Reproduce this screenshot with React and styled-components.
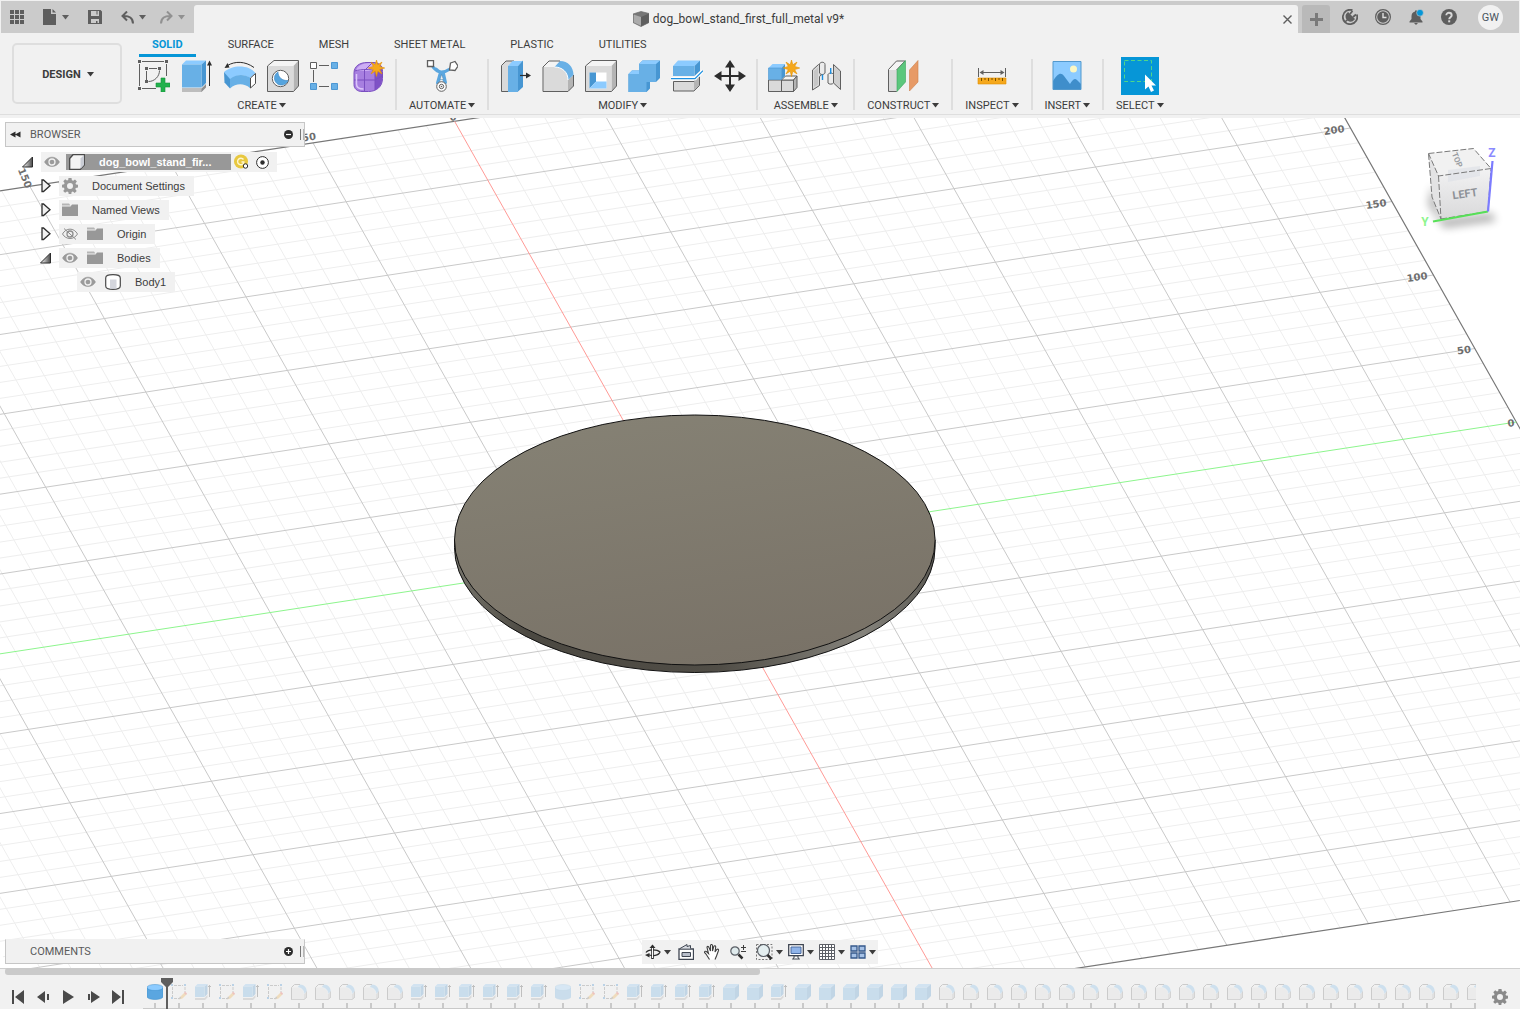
import React, { useState } from 'react'
import styled, { createGlobalStyle, css } from 'styled-components'

const GlobalStyle = createGlobalStyle`
  * {
    box-sizing: border-box;
  }

  body {
    margin: 0;
    background: #f1f1f1;
    color: #3c3c3c;
    font-family: Roboto, 'Liberation Sans', sans-serif;
    font-size: 11px;
  }

  button {
    margin: 0;
    padding: 0;
    border: 0;
    background: none;
    color: inherit;
    font: inherit;
    cursor: pointer;
  }

  svg {
    display: block;
  }
`

const Page = styled.div`
  display: flex;
  flex-direction: column;
  min-height: 100vh;
`

/* ---------- title bar ---------- */

const TitleBar = styled.header`
  display: flex;
  align-items: stretch;
  height: 33px;
  margin: 0 1px;
  border-top: 1px solid #f1f1f1;
  background: #cbcbcb;
  color: #5e5e5e;
`

const QuickAccess = styled.div`
  display: flex;
  align-items: center;
  width: 193px;
  padding-left: 9px;
`

const QuickButton = styled.button`
  display: flex;
  align-items: center;
  gap: 5px;
  margin-right: ${props => props.$after || 0}px;
  color: ${props => (props.$dim ? '#919191' : '#5e5e5e')};
`

const DocumentTab = styled.div`
  display: flex;
  flex: 1;
  align-items: center;
  margin-top: 4px;
  padding-left: 7px;
  border-radius: 3px 3px 0 0;
  background: #f1f1f1;
`

const DocumentTitle = styled.h1`
  display: flex;
  flex: 1;
  align-items: center;
  justify-content: center;
  gap: 4px;
  margin: 0;
  color: #3c3c3c;
  font-size: 12px;
  font-weight: 400;
`

const CloseTab = styled.button`
  display: grid;
  place-items: center;
  width: 22px;
  height: 28px;
  color: #5e5e5e;
`

const NewTab = styled.button`
  display: grid;
  place-items: center;
  width: 28px;
  margin: 4px 4px 0;
  border-radius: 3px 3px 0 0;
  background: #b9b9b9;
  color: #7a7a7a;
`

const AccountBar = styled.div`
  display: flex;
  align-items: center;
  gap: 17px;
  padding: 0 16px 0 8px;
`

const Avatar = styled.button`
  width: 25px;
  height: 25px;
  margin-left: 4px;
  border-radius: 50%;
  background: #f1f1f1;
  color: #4a5560;
`

/* ---------- ribbon ---------- */

const Ribbon = styled.div`
  display: flex;
  align-items: stretch;
  height: 82px;
  border-bottom: 1px solid #dedede;
`

const RibbonGap = styled.div`
  height: 3px;
`

const WorkspaceButton = styled.button`
  display: flex;
  align-items: center;
  justify-content: center;
  gap: 6px;
  width: 110px;
  height: 61px;
  margin: 10px 6px 0 12px;
  padding: 2px 0 0 2px;
  border: 2px solid #dedede;
  border-radius: 5px;
  font-weight: 700;
`

const RibbonMain = styled.div`
  flex: 1;
`

const Tabs = styled.nav`
  display: flex;
  gap: 19px;
  height: 24px;
  padding-left: 11px;
`

const Tab = styled.button`
  height: 24px;
  padding: 2px 13px 0;
  border-bottom: 3px solid transparent;

  ${props =>
    props.$active &&
    css`
      border-color: #0696d7;
      color: #0696d7;
      font-weight: 700;
    `}
`

const Groups = styled.div`
  display: flex;
`

const Group = styled.section`
  display: flex;
  flex-direction: column;
  align-items: center;
  padding: 0 10px;
`

const Divider = styled.div`
  width: 2px;
  height: 51px;
  margin-top: 2px;
  background: #dedede;
`

const ToolRow = styled.div`
  display: flex;
  align-items: center;
  gap: 11px;
  height: 38px;
`

const GroupLabel = styled.button`
  display: flex;
  align-items: center;
  gap: 2px;
  height: 20px;
  padding: 1px 2px 0;
`

/* ---------- canvas ---------- */

const Viewport = styled.main`
  position: relative;
  flex: 1;
  min-height: 320px;
  overflow: hidden;
  background: #ffffff;
`

const Scene = styled.svg`
  position: absolute;
  inset: 0;
  width: 100%;
  height: 100%;
`

const CubeSvg = styled.svg`
  position: absolute;
  top: 24px;
  right: 16px;
`

const Panel = styled.section`
  position: absolute;
  left: 5px;
  width: 300px;
  ${props => (props.$bottom ? 'bottom: 4px;' : 'top: 4px;')}
`

const PanelHeader = styled.div`
  display: flex;
  align-items: center;
  height: 25px;
  padding: 0 0 0 4px;
  border: 1px solid #c6c6c6;
  border-top-color: ${props => (props.$openTop ? '#f1f1f1' : '#c6c6c6')};
  background: #f1f1f1;
`

const PanelTitle = styled.h2`
  flex: 1;
  margin: 0;
  padding-left: ${props => (props.$indent ? 20 : 9)}px;
  color: #5a5a5a;
  font-size: 11px;
  font-weight: 400;
`

const Grip = styled.span`
  width: 4px;
  height: 11px;
  margin-left: 7px;
  border-left: 1px solid #777777;
  border-right: 1px solid #b5b5b5;
`

const Tree = styled.ul`
  margin: 5px 0 0;
  padding: 0;
  list-style: none;
  font-family: 'Liberation Sans', sans-serif;
`

const TreeRow = styled.li`
  display: flex;
  align-items: center;
  height: 20px;
  margin-bottom: 4px;
  padding-left: ${props => props.$indent}px;
`

const Twisty = styled.button`
  width: 19px;
  height: 20px;
`

const Chip = styled.div`
  display: flex;
  align-items: center;
  height: 20px;
  padding: 0 ${props => (props.$root ? 8 : 9)}px 0 3px;
  background: #f1f1f1;
`

const NodeName = styled.span`
  margin-left: 14px;
`

const RootName = styled.div`
  display: flex;
  align-items: center;
  height: 16px;
  width: 165px;
  margin: 0 3px 0 6px;
  padding-left: 3px;
  background: #989898;
  color: #ffffff;
  font-weight: 700;

  span {
    margin-left: 14px;
    white-space: nowrap;
  }
`

const ChipButton = styled.button`
  margin-right: ${props => props.$after || 0}px;
`

const NavBar = styled.div`
  position: absolute;
  bottom: 4px;
  left: 50%;
  display: flex;
  align-items: center;
  height: 24px;
  padding: 0 2px 0 3px;
  background: #f1f1f1;
  color: #3c3c3c;
  transform: translateX(-50%);
`

const NavButton = styled.button`
  display: flex;
  align-items: center;
  gap: 3px;
  margin-right: ${props => props.$after || 0}px;
`

/* ---------- timeline ---------- */

const Timeline = styled.footer`
  display: flex;
  height: 41px;
  border-top: 1px solid #cfcfcf;
`

const Playback = styled.div`
  display: flex;
  align-items: center;
  width: 143px;
  padding: 16px 0 0 6px;
  color: #4a4a4a;
`

const PlayButton = styled.button`
  display: grid;
  place-items: center;
  width: 25px;
`

const TrackWrap = styled.div`
  position: relative;
  flex: 1;
  min-width: 0;
`

const ScrollThumb = styled.div`
  position: absolute;
  z-index: 1;
  bottom: 34px;
  left: 5px;
  width: calc(50% - 5px);
  height: 7px;
  border-radius: 3px;
  background: #cacaca;
`

const TimelineArea = styled.div`
  position: relative;
`

const Track = styled.div`
  position: absolute;
  inset: 0;
  display: flex;
  padding-top: 15px;
  overflow: hidden;
  border-bottom: 1px solid #c9c9c9;
`

const Feature = styled.button`
  display: flex;
  flex: none;
  flex-direction: column;
  align-items: center;
  justify-content: space-between;
  width: 24px;

  &::after {
    content: '';
    width: 2px;
    height: 5px;
    background: #c9c9c9;
  }

  svg {
    opacity: ${props => (props.$rolledBack ? 0.25 : 1)};
  }
`

const Marker = styled.svg`
  position: absolute;
  top: 9px;
  left: 18px;
`

const TimelineSettings = styled.button`
  display: grid;
  place-items: center;
  width: 44px;
  padding: 16px 0 0 4px;
  color: #8a8a8a;
`

/* ---------- icons ---------- */

const Svg = ({ size = 32, w, h, box, children, ...rest }) => (
  <svg
    width={w || size}
    height={h || size}
    viewBox={box || `0 0 ${w || size} ${h || size}`}
    fill='none'
    aria-hidden='true'
    {...rest}
  >
    {children}
  </svg>
)

const Caret = () => (
  <Svg w={7} h={5}>
    <path d='M0 0h7L3.500 4.500z' fill='currentColor' />
  </Svg>
)

const Star = ({ x, y }) => (
  <path
    transform={`translate(${x} ${y})`}
    d='M0-8.500l1.300 4.800 4.200-2.700-2.300 4.300 5 1.600-5 1.600 2.300 4.300-4.200-2.700L0 8l-1.300-5.300-4.200 2.700 2.300-4.300-5-1.600 5-1.600-2.300-4.300 4.200 2.700z'
    fill='#f5a81c'
    stroke='#e69200'
    strokeWidth='0.6'
  />
)

const SketchIcon = () => (
  <Svg>
    <path
      d='M4 1.500h22M1.500 4v22M4 28.500h14M28.500 4v12M11 8.500h8M8.500 11v9M21.500 10.500c0 6-5 11-11 11'
      stroke='#5f5f5f'
    />
    <path
      d='M0 0h3v3H0zM27 0h3v3h-3zM0 27h3v3H0zM7 7h3v3H7zM20 7h3v3h-3zM7 20h3v3H7z'
      fill='#5f5f5f'
    />
    <path
      d='M23 18h4v5h5v4h-5v5h-4v-5h-5v-4h5z'
      fill='#22b14c'
      stroke='#15963b'
      strokeWidth='0.6'
    />
  </Svg>
)

const ExtrudeIcon = () => (
  <Svg>
    <path d='M1 28.500h19.500l4.500-4.500v3.500L20.500 32H1z' fill='#8f8f8f' />
    <path d='M1 28.500h19.500V32H1z' fill='#bdbdbd' />
    <path d='M1 4.500L5 0.500h20l-4.500 4z' fill='#8ccbff' />
    <path d='M20.500 4.500l4.500-4V23l-4.500 4.500z' fill='#4796d2' />
    <path d='M1 4.500h19.500v23H1z' fill='#68b0e6' />
    <path d='M28.500 4v22' stroke='#2d2d2d' />
    <path d='M28.500 0.500l2.500 5h-5z' fill='#2d2d2d' />
  </Svg>
)

const RevolveIcon = () => (
  <Svg>
    <path
      d='M0 12C8 5 24 4 31.500 13l-5.500 5c-6-4-14-4-20 2z'
      fill='#8ccbff'
    />
    <path d='M0 12l6 7v9.500l-5.500-6z' fill='#4796d2' />
    <path d='M6 19c6-5 14-5 20-1.500v10.500c-6-5-14-5-20 .5z' fill='#68b0e6' />
    <path
      d='M26.500 18l5-4.500v10l-5 4.500z'
      fill='#ffffff'
      stroke='#4d4d4d'
    />
    <path d='M3.500 5.500C11 1 21 1 30 7.500' stroke='#2d2d2d' />
    <path d='M0.500 8l3-5 2 4.500z' fill='#2d2d2d' />
  </Svg>
)

const Box = ({ children }) => (
  <>
    <path d='M0.500 6L7 0.500h24.500L26.500 6z' fill='#f4f4f4' />
    <path d='M26.500 6l5-5.500V26l-5 5.500z' fill='#b4b4b4' />
    <path d='M0.500 6h26v25.500H0.500z' fill='#dadada' />
    <path d='M0.500 6L7 0.500h24.500V26l-5 5.500H0.500z' stroke='#5f5f5f' />
    {children}
  </>
)

const HoleIcon = () => (
  <Svg>
    <Box>
      <circle cx='13.500' cy='18.500' r='8.200' fill='#ffffff' stroke='#5f5f5f' />
      <path
        d='M11 12c0 5 4 9 10 8.500A7 7 0 1 1 11 12z'
        fill='#55a4de'
        stroke='#3b86c2'
        strokeWidth='0.6'
      />
    </Box>
  </Svg>
)

const PatternIcon = () => (
  <Svg>
    <path d='M9 5.500h10M9 26.500h10M3.500 10v12' stroke='#5f5f5f' />
    <path d='M0.500 2.500h6v6h-6z' fill='#ffffff' stroke='#5f5f5f' />
    <path
      d='M21.500 2.500h6v6h-6zM0.500 23.500h6v6h-6zM21.500 23.500h6v6h-6z'
      fill='#68b0e6'
      stroke='#4d97d3'
    />
  </Svg>
)

const FormIcon = () => (
  <Svg>
    <path
      d='M1 13C1 6 7 2.500 14 2.500h6c6 0 9.500 3 9.500 9v7c0 8-6 13-14 13H9c-5 0-8-3-8-7z'
      fill='#a77fe0'
      stroke='#7a4fc0'
    />
    <path d='M4 8c3-4 8-5 15-5l5 2-5 6H3z' fill='#cdaef5' />
    <path d='M22 10l7-4v13c0 5-3 9-7 11z' fill='#7f52c6' />
    <path
      d='M1 20h21M11.500 10v21M1.500 11C9 9 18 9 22 11M22 11v19M22 20l7-4M12 10l7-7'
      stroke='#7a4fc0'
    />
    <path d='M3.500 14v10c0 4 3 5 7 5' stroke='#dcc5fa' strokeWidth='1.500' />
    <Star x={23.500} y={8.500} />
  </Svg>
)

const AutomateIcon = () => (
  <Svg>
    <path
      d='M7 7c4 5 7 5 8.500 5S21 11 24 9M14 14l-2.500 9M17.500 13.500l2 9M10 9c3 4 8 4 12 1M15.500 13l-3 8M15.500 13l3 8'
      stroke='#5aa6df'
      strokeWidth='3'
      strokeLinecap='round'
    />
    <path d='M15.500 14.500l2 5h-3.500z' fill='#f1f1f1' stroke='#4b80a8' strokeWidth='0.500' />
    <path d='M1.500 0.500h6v6h-6z' fill='#ffffff' stroke='#5f5f5f' strokeWidth='1.300' />
    <path
      d='M24.500 3l4.500-1.500L32 6l-3 4.500-5.500-.5z'
      fill='#ffffff'
      stroke='#5f5f5f'
      strokeWidth='1.300'
    />
    <circle cx='15.500' cy='26.500' r='4.800' fill='#ffffff' stroke='#5f5f5f' />
    <circle cx='15.500' cy='26.500' r='2.200' stroke='#5f5f5f' />
    <circle cx='15.500' cy='26.500' r='0.800' fill='#5f5f5f' />
  </Svg>
)

const PressPullIcon = () => (
  <Svg>
    <path
      d='M2.500 5.500L7 1h8v30.500H2.500z'
      fill='#dadada'
      stroke='#5f5f5f'
    />
    <path d='M9 6l4.500-5H24l-5 5z' fill='#8ccbff' />
    <path d='M19 6l5-5.500V27l-5 4.500z' fill='#4796d2' />
    <path d='M9 6h10v26H9z' fill='#68b0e6' />
    <path d='M21 15.500h7' stroke='#2d2d2d' strokeWidth='1.200' />
    <path d='M27 12.500l5 3-5 3z' fill='#2d2d2d' />
  </Svg>
)

const FilletIcon = ({ size = 32, line = 1 }) => (
  <Svg size={size} box='0 0 32 32'>
    <path
      d='M1.500 7L7 0.800h8L26 8l5.500 7v10.500L26 31.500H1.500z'
      fill='#f4f4f4'
    />
    <path d='M26 20l5.500-5v11L26 31.500z' fill='#b4b4b4' />
    <path d='M1.500 7h11C20 7 26 12 26 20v11.500H1.500z' fill='#dadada' />
    <path d='M12.500 7L18 1c8 0 13.500 6 13.500 14L26 20c0-8-6-13-13.500-13z' fill='#68b0e6' />
    <path
      d='M18 1H7L1 7v24.500h25l5.500-5.500V15'
      stroke='#5f5f5f'
      strokeWidth={line}
    />
    <path d='M12.500 7C20 7 26 12 26 20' stroke='#ffffff' />
  </Svg>
)

const ShellIcon = () => (
  <Svg>
    <Box>
      <path d='M4.500 12.500h17v16h-17z' fill='#ffffff' />
      <path d='M4.500 12.500h6.500v9l-6.500 7z' fill='#4796d2' />
      <path d='M4.500 28.500l6.500-7h10.500v7z' fill='#8ccbff' />
    </Box>
  </Svg>
)

const CombineIcon = () => (
  <Svg>
    <path d='M0.500 14L4 10.500h7V4L14.500 0.500H32V18l-4 4h-6v6.500l-3.500 3.500h-18z' fill='#4796d2' />
    <path d='M0.500 14L4 10.500h7V14zM11 4l3.500-3.500H32L28 4z' fill='#8ccbff' />
    <path d='M0.500 14H11V4h17v18h-9.500v10h-18z' fill='#68b0e6' />
  </Svg>
)

const SplitIcon = () => (
  <Svg>
    <path d='M2.500 21.500h20.500l5.500-5v9L23 31H2.500z' fill='#dadada' stroke='#5f5f5f' />
    <path d='M23 22l5-4.500v8L23 30.500z' fill='#b4b4b4' />
    <path d='M2 6l5-5.500h22L23.500 6z' fill='#8ccbff' />
    <path d='M23.500 6L29 0.500V11l-5.500 5z' fill='#4796d2' />
    <path d='M2 6h21.500v10H2z' fill='#68b0e6' />
    <path d='M0 18.700h24l8-8' stroke='#ffffff' strokeWidth='3.500' />
    <path d='M0 18.700h24l8-8' stroke='#1e90e0' strokeWidth='1.300' />
  </Svg>
)

const MoveIcon = () => (
  <Svg>
    <path d='M16 5v22M5 16h22' stroke='#2d2d2d' strokeWidth='2' />
    <path
      d='M16 0l5 7.500H11zM16 32l5-7.500H11zM0 16l7.500-5v10zM32 16l-7.500-5v10z'
      fill='#2d2d2d'
    />
  </Svg>
)

const NewComponentIcon = () => (
  <Svg>
    <path d='M0.500 20h13v11.500H0.500zM13.500 20h12v11.500h-12z' fill='#dadada' stroke='#5f5f5f' />
    <path d='M13.500 20l4-4H29l-3.500 4z' fill='#f4f4f4' stroke='#5f5f5f' />
    <path d='M25.500 20l3.500-4v11.500l-3.500 4z' fill='#b4b4b4' stroke='#5f5f5f' />
    <path d='M0.500 8L4.500 4H17l-3.500 4z' fill='#8ccbff' />
    <path d='M13.500 8L17 4v12l-3.500 3.500z' fill='#4796d2' />
    <path d='M0.500 8h13v11.500h-13z' fill='#68b0e6' stroke='#4796d2' strokeWidth='0.600' />
    <Star x={23.500} y={8.500} />
  </Svg>
)

const JointIcon = () => (
  <Svg>
    <path d='M1.500 10l6-5.500h4V14l-3 2.500v9l-7 4.500z' fill='#dadada' stroke='#5f5f5f' />
    <path d='M3 11l4-3.500v17L3 27z' fill='#c6c6c6' />
    <path d='M8.500 4.500c0-3 5.500-3 5.500 0V13c-1 2-4.500 2-5.500 0z' fill='#ececec' stroke='#5f5f5f' />
    <path d='M22.500 4.500l7 6.500v18.500l-7-6.500z' fill='#cfcfcf' stroke='#5f5f5f' />
    <path d='M17 14.500c1-2 4.500-2 5.500 0V23c-1 1.500-4.500 1.500-5.500 0z' fill='#ececec' stroke='#5f5f5f' />
    <path d='M11.500 14.500V20M19.700 8v6' stroke='#1e90e0' strokeWidth='1.400' />
  </Svg>
)

const ConstructIcon = () => (
  <Svg>
    <path d='M1.500 9.500l8-8.500H18L9.500 10v21.500h-8z' fill='#f4f4f4' stroke='#5f5f5f' />
    <path d='M2 10h8v21H2z' fill='#dadada' />
    <path d='M10 10l8.500-9.500v21.500L10 31.500z' fill='#5bc77c' stroke='#3da45e' strokeWidth='0.600' />
    <path d='M22.500 10L31 0.500v21.500l-8.500 9z' fill='#e79a66' stroke='#cd7f4c' strokeWidth='0.600' />
  </Svg>
)

const MeasureIcon = () => (
  <Svg>
    <path d='M2.500 8v9M29.500 8v9M5 12.500h22' stroke='#5f5f5f' />
    <path d='M3.500 12.500l4-2.500v5zM28.500 12.500l-4-2.500v5z' fill='#5f5f5f' />
    <path d='M2 18h28v6H2z' fill='#f5a81c' stroke='#e08f00' strokeWidth='0.600' />
    <path
      d='M5.500 18v3M9 18v2M12.500 18v3M16 18v2M19.500 18v3M23 18v2M26.500 18v3'
      stroke='#7b5200'
    />
  </Svg>
)

const InsertIcon = () => (
  <Svg>
    <path d='M2 1.500h28v28H2z' fill='#8ccbff' />
    <path
      d='M2 21c5-8 8-9 11-5l6 8c3-5 5-6 7-4l4 4v6H2z'
      fill='#3f8ecb'
    />
    <path d='M2 1.500h28v28H2z' stroke='#5399cd' />
    <circle cx='22.500' cy='9' r='3.500' fill='#fbf7c4' />
  </Svg>
)

const SelectIcon = () => (
  <Svg size={38}>
    <path d='M0 0h38v38H0z' fill='#0696d7' />
    <path d='M3.500 3.500h27v21h-27z' stroke='#4fd68a' strokeDasharray='4 2.500' />
    <path
      d='M24 17.500v15l3.500-3 2.500 5.500 3-1.500-2.500-5h4.500z'
      fill='#ffffff'
    />
  </Svg>
)

const GridIcon = () => (
  <Svg size={15}>
    <path
      d='M0 0h4v4H0zM5 0h4v4H5zM10 0h4v4h-4zM0 5h4v4H0zM5 5h4v4H5zM10 5h4v4h-4zM0 10h4v4H0zM5 10h4v4H5zM10 10h4v4h-4z'
      fill='currentColor'
    />
  </Svg>
)

const FileIcon = () => (
  <Svg w={14} h={16}>
    <path d='M0 0h8v5h5v11H0z' fill='currentColor' />
    <path d='M9.500 0v3.500H13z' fill='currentColor' />
  </Svg>
)

const SaveIcon = () => (
  <Svg w={14} h={14}>
    <path
      d='M0 0h12.500L14 1.500V14H0zM3 1v5h8V1H9.500v3.500h-1V1zM3 9v4h5v-2h1.500v2H11V9z'
      fill='currentColor'
      fillRule='evenodd'
    />
  </Svg>
)

const UndoIcon = ({ flip }) => (
  <Svg w={13} h={13}>
    <path
      d={
        flip
          ? 'M7 0.500L11.500 5 7 9.500M11 5C5 4.500 1 7 1 12.500'
          : 'M6 0.500L1.500 5 6 9.500M2 5c6-.5 10 2 10 7.500'
      }
      stroke='currentColor'
      strokeWidth='2'
    />
  </Svg>
)

const PartIcon = () => (
  <Svg w={16} h={16}>
    <path d='M0 3L8 0.500l8 2v9L8 15.500l-8-4z' fill='#777777' />
    <path d='M0.500 3.500L8 6v9l-7.500-3.500z' fill='#ababab' />
    <path d='M8 6l8-3.500v9L8 15.500z' fill='#5f5f5f' />
    <path d='M0 3L8 0.500l8 2v9L8 15.500l-8-4z' stroke='#6b6b6b' strokeWidth='0.700' />
  </Svg>
)

const CrossIcon = () => (
  <Svg size={9}>
    <path d='M0.500 0.500l8 8M8.500 0.500l-8 8' stroke='currentColor' strokeWidth='1.400' />
  </Svg>
)

const PlusIcon = () => (
  <Svg size={13}>
    <path d='M6.500 0v13M0 6.500h13' stroke='currentColor' strokeWidth='3' />
  </Svg>
)

const ExtensionsIcon = () => (
  <Svg size={16}>
    <path
      d='M10.500 1.200a7.200 7.200 0 1 0 4.300 4.300'
      stroke='#5e5e5e'
      strokeWidth='1.800'
    />
    <path
      d='M3 13l2.500-2.500c-2-2.500-1.500-5 .5-6.500L12 10c-1.500 2-4 2.500-6 1'
      fill='#5e5e5e'
      stroke='#5e5e5e'
      strokeWidth='1.500'
    />
    <path d='M8 5l2.500-3M11 8l3-2.500' stroke='#5e5e5e' strokeWidth='1.800' />
  </Svg>
)

const ClockIcon = () => (
  <Svg size={16}>
    <circle cx='8' cy='8' r='7.400' stroke='#5e5e5e' strokeWidth='1.200' />
    <circle cx='8' cy='8' r='5.800' fill='#5e5e5e' />
    <path d='M8 4v4.500h3.500' stroke='#e0e0e0' strokeWidth='1.400' />
  </Svg>
)

const BellIcon = () => (
  <Svg size={16}>
    <path
      d='M7 1.500h2v1c2.500.8 3.500 2.500 3.500 5v2.500l2 2.500v1h-13v-1l2-2.500V7.500c0-2.500 1-4.200 3.500-5z'
      fill='#5e5e5e'
    />
    <path d='M6 14h4l-2 2z' fill='#5e5e5e' />
    <circle cx='12' cy='3.800' r='3.400' fill='#0696d7' stroke='#cbcbcb' strokeWidth='0.600' />
  </Svg>
)

const HelpIcon = () => (
  <Svg size={16}>
    <circle cx='8' cy='8' r='8' fill='#5e5e5e' />
    <path
      d='M5.300 6.300C5.300 2.800 10.700 3 10.700 6.200c0 2-2.500 2-2.500 4'
      stroke='#d8d8d8'
      strokeWidth='1.900'
    />
    <path d='M7.200 11.300h2v2h-2z' fill='#d8d8d8' />
  </Svg>
)

const RewindIcon = () => (
  <Svg w={11} h={8}>
    <path d='M5.500 0.500v6L0 3.500zM10.500 0.500v6L5 3.500z' fill='#2d2d2d' />
  </Svg>
)

const RoundIcon = ({ plus }) => (
  <Svg size={9}>
    <circle cx='4.500' cy='4.500' r='4.500' fill='#2d2d2d' />
    <path d={plus ? 'M2 4.500h5M4.500 2v5' : 'M2 4.500h5'} stroke='#ffffff' strokeWidth='1.200' />
  </Svg>
)

const twistyStops = (
  <defs>
    <linearGradient id='twisty' x1='0' x2='1'>
      <stop offset='0' stopColor='#ffffff' />
      <stop offset='1' stopColor='#4a4a4a' />
    </linearGradient>
  </defs>
)

const OpenTwisty = () => (
  <Svg w={12} h={12}>
    {twistyStops}
    <path d='M10.500 1v10H0.500z' fill='url(#twisty)' stroke='#2d2d2d' />
  </Svg>
)

const ClosedTwisty = () => (
  <Svg w={12} h={14}>
    <path d='M2 1v11.500h1.500L10 6.800 3.500 1z' fill='#f1f1f1' stroke='#2d2d2d' strokeWidth='1.300' />
  </Svg>
)

const EyeIcon = ({ off }) => (
  <Svg w={16} h={12}>
    <path
      d='M0.500 6C4-.5 12-.5 15.500 6 12 12 4 12 0.500 6z'
      fill={off ? 'none' : '#9b9b9b'}
      stroke='#8d8d8d'
      strokeWidth={off ? 1 : 0.5}
    />
    <circle
      cx='8'
      cy='6'
      r='3'
      fill={off ? 'none' : '#9b9b9b'}
      stroke={off ? '#8d8d8d' : '#f1f1f1'}
      strokeWidth='1.300'
    />
    {off && <path d='M2 0.500l12 11' stroke='#8d8d8d' />}
  </Svg>
)

const gearPath =
  'M6.500 0h3l.4 2.200 1.300.6L13 1.500 14.900 3.400 13.500 5.200l.5 1.300 2 .3v2.700l-2.200.4-.5 1.200 1.400 1.900-2 1.900-1.800-1.300-1.300.5L9.300 16H6.700l-.4-2-1.300-.5-1.900 1.300-1.900-1.900L2.500 11.200 2 9.800 0 9.400V6.700l2.100-.4.5-1.200L1.300 3.200 3.200 1.300 5 2.600l1.200-.5zM8 5a3 3 0 1 0 0 6 3 3 0 0 0 0-6z'

const GearIcon = ({ fill = '#989898' }) => (
  <Svg size={16}>
    <path d={gearPath} fill={fill} fillRule='evenodd' />
  </Svg>
)

const FolderIcon = () => (
  <Svg w={16} h={14}>
    <path d='M0 0.500h7l1.500 2H0z' fill='#b5b5b5' />
    <path d='M0 3.500h8.500l1.500-2h6V13H0z' fill='#989898' />
  </Svg>
)

const ComponentIcon = () => (
  <Svg size={16}>
    <path d='M0.700 4.500L4 0.700h11.300V11l-4 4.300H0.700z' fill='#f4f4f4' stroke='#4a4a4a' strokeWidth='1.300' />
    <path d='M11.500 4.500l3.500-3.500v10l-3.500 4z' fill='#c9ccd4' />
  </Svg>
)

const BodyIcon = () => (
  <Svg size={16}>
    <path
      d='M0.700 4C0.700 1.500 3 0.700 8 0.700s7.300.8 7.300 3.300v8c0 2.500-2.300 3.300-7.300 3.300S0.700 14.500 0.700 12z'
      fill='#ffffff'
      stroke='#4a4a4a'
      strokeWidth='1.200'
    />
    <path d='M5 5.500h6.500v9.500H5z' fill='#c9ccd4' opacity='0.800' />
  </Svg>
)

const OwnerIcon = () => (
  <Svg w={16} h={16}>
    <circle cx='7' cy='7.500' r='7' fill='#e8c840' />
    <path d='M9.500 5.500a3.300 3.300 0 1 0 .3 3.500V8H7.500' stroke='#fff7cf' strokeWidth='1.400' />
    <circle cx='11.500' cy='12' r='2.200' fill='#ffffff' stroke='#2d2d2d' />
  </Svg>
)

const ActivateIcon = () => (
  <Svg size={13}>
    <circle cx='6.500' cy='6.500' r='5.900' fill='#ffffff' stroke='#2d2d2d' />
    <circle cx='6.500' cy='6.500' r='2.200' fill='#2d2d2d' />
  </Svg>
)

const OrbitIcon = () => (
  <Svg size={16}>
    <path d='M1 8.500C3 5 12 5 15 8c-1 3.500-8 4.500-12 2.500' stroke='#2d2d2d' strokeWidth='1.200' />
    <path d='M7.500 15V3' stroke='#2d2d2d' strokeWidth='2.600' />
    <path d='M7.500 14V3' stroke='#ffffff' />
    <path d='M7.500 0.500l3 3.500h-6z' fill='#2d2d2d' />
    <path d='M0 11l4.500-2v4.500z' fill='#2d2d2d' />
  </Svg>
)

const LookAtIcon = () => (
  <Svg size={16}>
    <path d='M1 5h14.500v10.500H1z' fill='#ffffff' stroke='#3f4652' strokeWidth='1.300' />
    <path d='M4 8.500h8.500v4H4z' fill='#b9bfcb' stroke='#3f4652' />
    <path d='M2 4.500l7-4v2l3.500-1V4.500' fill='#d8dbe2' stroke='#3f4652' />
  </Svg>
)

const PanIcon = () => (
  <Svg size={16}>
    <path
      d='M5.500 15.500L2 10 0.500 8.500c0-1.500 1.500-1.500 2.500-.5l1.500 1.500L3 3.500c0-1.500 1.500-1.500 2 0L6.500 7V1.500c.2-1.300 1.800-1.300 2 0V7l1.300-4.500c.6-1.200 2-.8 1.900.5L11 8l1.800-2.500c1-.8 2 0 1.700 1L12.500 12 11 15.500'
      fill='#ffffff'
      stroke='#3f3f3f'
      strokeWidth='1.100'
    />
  </Svg>
)

const ZoomIcon = () => (
  <Svg size={16}>
    <circle cx='5' cy='7' r='4.200' fill='#dfeaec' stroke='#5a5f66' strokeWidth='1.200' />
    <path d='M8.500 10.500l4 4' stroke='#2d2d2d' strokeWidth='2.500' />
    <path d='M11 3.500h5M13.500 1v5M11 7.500h5' stroke='#3f3f3f' />
  </Svg>
)

const FitIcon = () => (
  <Svg w={17} h={16}>
    <path d='M0.500 0.500h15.500v15H0.500z' stroke='#777777' strokeDasharray='2 1.500' />
    <circle cx='7.500' cy='6.500' r='6' fill='#e4eef0' stroke='#5a5f66' strokeWidth='1.200' />
    <path d='M11.500 11l4 4' stroke='#2d2d2d' strokeWidth='2.500' />
  </Svg>
)

const DisplayIcon = () => (
  <Svg size={16}>
    <path d='M0.700 0.700h14.600v11H0.700z' fill='#ffffff' stroke='#3f4652' strokeWidth='1.300' />
    <path d='M3 3h10v6.500H3z' fill='#8fb4ea' stroke='#4a6ba0' />
    <path d='M6 12h4v2l1.500 1h-7L6 14z' fill='#ffffff' stroke='#3f4652' />
  </Svg>
)

const LayoutGridIcon = () => (
  <Svg size={16}>
    <path
      d='M0.500 0.500h15v15H0.500zM3.500 0v16M6.500 0v16M9.500 0v16M12.500 0v16M0 3.500h16M0 6.500h16M0 9.500h16M0 12.500h16'
      stroke='#5c5f66'
      fill='#ffffff'
    />
  </Svg>
)

const ViewportsIcon = () => (
  <Svg w={16} h={14}>
    <path
      d='M1 1h6v5H1zM9 1h6v5H9zM1 8h6v5H1zM9 8h6v5H9z'
      fill='#a5c1e6'
      stroke='#34588c'
      strokeWidth='1.300'
    />
  </Svg>
)

/* small timeline feature icons */

const TimelineIcon = ({ kind }) => {
  if (kind === 'fillet') {
    return <FilletIcon size={16} line={2} />
  }
  if (kind === 'cylinder') {
    return (
      <Svg size={16}>
        <path d='M0 3.500v9c0 4 16 4 16 0v-9z' fill='#5aa6e0' />
        <ellipse cx='8' cy='3.500' rx='8' ry='3' fill='#8ccbff' />
        <path d='M0 3.500v9c0 4 16 4 16 0v-9M0 3.500C0-.5 16-.5 16 3.500S0 7.500 0 3.500' stroke='#3f8ecb' strokeWidth='0.500' />
      </Svg>
    )
  }
  if (kind === 'box') {
    return (
      <Svg size={16}>
        <path d='M0 3.500L3.500 0H16l-4 3.500z' fill='#79bdf2' />
        <path d='M12 3.500L16 0v12l-4 4z' fill='#3584c4' />
        <path d='M0 3.500h12V16H0z' fill='#55a4de' />
      </Svg>
    )
  }
  if (kind === 'extrude') {
    return (
      <Svg size={16}>
        <path d='M0 14h9.500l3-3v2.500L10 16H0z' fill='#999999' />
        <path d='M0 2.500L2.500 0h10l-3 2.500z' fill='#79bdf2' />
        <path d='M9.500 2.500l3-2.500v10l-3 3z' fill='#3584c4' />
        <path d='M0 2.500h9.500V13H0z' fill='#55a4de' />
        <path d='M14.500 1v12M13 2.500h3' stroke='#2d2d2d' />
      </Svg>
    )
  }
  return (
    <Svg size={16}>
      <path d='M3 1.500h9M1.500 3v10M14 3v5M3 14.500h5' stroke='#5f5f5f' strokeDasharray='3 1' />
      <path d='M0 0h2v2H0zM13 0h2v2h-2zM0 13h2v2H0z' fill='#1e78c8' />
      <path d='M8 15.500l1.500-3 4-4 2 2-4 4z' fill='#eda225' />
      <path d='M13 9l1-1.500 2 2L15 11z' fill='#e2382e' />
      <path d='M7.500 15.500l1.500-3 1.500 1.500z' fill='#555555' />
    </Svg>
  )
}

/* ---------- data ---------- */

const ribbonTabs = ['SOLID', 'SURFACE', 'MESH', 'SHEET METAL', 'PLASTIC', 'UTILITIES']

const ribbonGroups = [
  {
    label: 'CREATE',
    tools: [
      ['Create Sketch', SketchIcon],
      ['Extrude', ExtrudeIcon],
      ['Revolve', RevolveIcon],
      ['Hole', HoleIcon],
      ['Rectangular Pattern', PatternIcon],
      ['Create Form', FormIcon]
    ]
  },
  { label: 'AUTOMATE', tools: [['Automated Modeling', AutomateIcon]] },
  {
    label: 'MODIFY',
    tools: [
      ['Press Pull', PressPullIcon],
      ['Fillet', FilletIcon],
      ['Shell', ShellIcon],
      ['Combine', CombineIcon],
      ['Split Body', SplitIcon],
      ['Move', MoveIcon]
    ]
  },
  {
    label: 'ASSEMBLE',
    tools: [
      ['New Component', NewComponentIcon],
      ['Joint', JointIcon]
    ]
  },
  { label: 'CONSTRUCT', tools: [['Offset Plane', ConstructIcon]] },
  { label: 'INSPECT', tools: [['Measure', MeasureIcon]] },
  { label: 'INSERT', tools: [['Insert Image', InsertIcon]] },
  { label: 'SELECT', tools: [['Select', SelectIcon]] }
]

const repeat = (kind, count) => Array(count).fill(kind)

const features = [
  'cylinder',
  'sketch',
  'extrude',
  'sketch',
  'extrude',
  'sketch',
  ...repeat('fillet', 5),
  ...repeat('extrude', 6),
  'cylinder',
  ...repeat('sketch', 2),
  ...repeat('extrude', 4),
  ...repeat('box', 2),
  'extrude',
  ...repeat('box', 6),
  ...repeat('fillet', 23)
]

/* ---------- ground grid ---------- */

// one grid square is 10 mm, u runs along the green axis and v along the red one
const project = (u, v) => [
  695 + u * 28.32 + v * 8.29,
  429.6 - u * 4.33 + v * 14.7
]

const segment = (u1, v1, u2, v2) =>
  `M${project(u1, v1).join(' ')}L${project(u2, v2).join(' ')}`

const MIN_U = -30
const MAX_U = 29
const MIN_V = -29
const MAX_V = 30

const gridLines = wanted => {
  let d = ''
  for (let u = MIN_U + 1; u < MAX_U; u++) {
    if (u !== 0 && (u % 5 === 0) === wanted) d += segment(u, MIN_V, u, MAX_V)
  }
  for (let v = MIN_V + 1; v < MAX_V; v++) {
    if (v !== 0 && (v % 5 === 0) === wanted) d += segment(MIN_U, v, MAX_U, v)
  }
  return d
}

const minorLines = gridLines(false)
const majorLines = gridLines(true)

const border =
  segment(MIN_U, MIN_V, MAX_U, MIN_V) +
  segment(MAX_U, MIN_V, MAX_U, MAX_V) +
  segment(MIN_U, MAX_V, MAX_U, MAX_V)

const rulerLabels = [
  ['200', 1334, 12, -8],
  ['150', 1376, 86, -8],
  ['100', 1417, 159, -8],
  ['50', 1464, 232, -8],
  ['0', 1511, 305, -8],
  ['50', 309, 19, -8],
  ['0', 453, -1, -8],
  ['150', 25, 60, 68]
]

const RulerText = styled.text`
  fill: #6e6e6e;
  font-family: 'DejaVu Sans', sans-serif;
  font-size: 10px;
  font-weight: 700;
  text-anchor: middle;
  dominant-baseline: central;
`

const Model = () => (
  <Scene viewBox='0 0 1520 850' preserveAspectRatio='xMinYMin slice' aria-label='Model'>
    <defs>
      <linearGradient id='face' x1='0.3' y1='0' x2='0.600' y2='1'>
        <stop offset='0' stopColor='#858174' />
        <stop offset='1' stopColor='#797267' />
      </linearGradient>
      <linearGradient id='rim' x1='0' x2='1'>
        <stop offset='0' stopColor='#77756c' />
        <stop offset='0.150' stopColor='#4c4942' />
        <stop offset='0.550' stopColor='#504d46' />
        <stop offset='0.850' stopColor='#85837c' />
        <stop offset='1' stopColor='#5a5852' />
      </linearGradient>
    </defs>
    <path d={minorLines} stroke='#eeeeee' fill='none' />
    <path d={majorLines} stroke='#c9c9c9' fill='none' />
    <path d={border} stroke='#777777' fill='none' strokeWidth='1.200' />
    <path d={segment(MIN_U, 0, MAX_U, 0)} stroke='#8df58d' />
    <path d={segment(0, MIN_V, 0, MAX_V)} stroke='#ff9a96' />
    {rulerLabels.map(([text, x, y, angle]) => (
      <RulerText key={`${text}-${x}`} transform={`translate(${x} ${y}) rotate(${angle})`}>
        {text}
      </RulerText>
    ))}
    <path
      d='M454.500 422v7.500a240.300 125 0 0 0 480.600 0V422z'
      fill='url(#rim)'
      stroke='#111111'
    />
    <ellipse cx='694.800' cy='422' rx='240.300' ry='125' fill='url(#face)' stroke='#111111' />
  </Scene>
)

const CubeText = styled.text`
  fill: ${props => props.$color};
  font-family: Roboto, sans-serif;
  font-size: ${props => props.$size}px;
  font-weight: 700;
  text-anchor: middle;
  dominant-baseline: central;
`

const ViewCube = () => (
  <CubeSvg width='90' height='96' viewBox='1414 142 90 96' aria-label='View cube'>
    <defs>
      <filter id='soft' x='-30%' y='-30%' width='160%' height='160%'>
        <feGaussianBlur stdDeviation='4' />
      </filter>
      <linearGradient id='cubeFront' x1='0' y1='0' x2='0' y2='1'>
        <stop offset='0' stopColor='#f2f2f3' />
        <stop offset='1' stopColor='#d9d9da' />
      </linearGradient>
    </defs>
    <path d='M1432 185l10 34 50-6 4 8-52 7-16-24z' fill='#000000' opacity='0.300' filter='url(#soft)' />
    <path d='M1428.500 153.500l45-5 17.500 20-52.500 7.500z' fill='#f1f1f1' />
    <path d='M1428.500 153.500l10 22.500 2.500 43-9-22z' fill='#e3e3e4' />
    <path d='M1438.500 176l52.500-7.500-3 43-47 7.500z' fill='url(#cubeFront)' />
    <path d='M1448 170l32-4v10l-32 6z' fill='#dcdfe6' opacity='0.600' />
    <path
      d='M1428.500 153.500l45-5 17.500 20-52.500 7.500zM1438.500 176l2.500 43-9-22-3.500-43.500M1441 219l47-7.500 3-43'
      stroke='#7a7a7a'
      strokeDasharray='6 2'
      fill='none'
    />
    <path d='M1433 221.500l55-10' stroke='#57e057' strokeWidth='2.200' />
    <path d='M1488 211.500l4.500-50.500' stroke='#7c7cff' strokeWidth='2.200' />
    <CubeText $color='#8d9197' $size={11} transform='translate(1465 194) rotate(-8)'>
      LEFT
    </CubeText>
    <CubeText $color='#9a9da2' $size={8} transform='translate(1457 160) rotate(68)'>
      TOP
    </CubeText>
    <CubeText $color='#8ef58e' $size={12} x='1425' y='222'>
      Y
    </CubeText>
    <CubeText $color='#8a8aff' $size={12} x='1492' y='153'>
      Z
    </CubeText>
  </CubeSvg>
)

/* ---------- components ---------- */

const Header = () => (
  <TitleBar>
    <QuickAccess>
      <QuickButton aria-label='Show data panel' $after={18}>
        <GridIcon />
      </QuickButton>
      <QuickButton aria-label='File' $after={19}>
        <FileIcon />
        <Caret />
      </QuickButton>
      <QuickButton aria-label='Save' $after={19}>
        <SaveIcon />
      </QuickButton>
      <QuickButton aria-label='Undo' $after={14}>
        <UndoIcon />
        <Caret />
      </QuickButton>
      <QuickButton aria-label='Redo' $dim>
        <UndoIcon flip />
        <Caret />
      </QuickButton>
    </QuickAccess>
    <DocumentTab>
      <DocumentTitle>
        <PartIcon />
        dog_bowl_stand_first_full_metal v9*
      </DocumentTitle>
      <CloseTab aria-label='Close document'>
        <CrossIcon />
      </CloseTab>
    </DocumentTab>
    <NewTab aria-label='New design'>
      <PlusIcon />
    </NewTab>
    <AccountBar>
      <button aria-label='Extensions'>
        <ExtensionsIcon />
      </button>
      <button aria-label='Job status'>
        <ClockIcon />
      </button>
      <button aria-label='Notifications'>
        <BellIcon />
      </button>
      <button aria-label='Help'>
        <HelpIcon />
      </button>
      <Avatar>GW</Avatar>
    </AccountBar>
  </TitleBar>
)

const Toolbar = () => {
  const [active, setActive] = useState('SOLID')

  return (
    <Ribbon>
      <WorkspaceButton>
        DESIGN
        <Caret />
      </WorkspaceButton>
      <RibbonMain>
        <Tabs>
          {ribbonTabs.map(name => (
            <Tab key={name} $active={name === active} onClick={() => setActive(name)}>
              {name}
            </Tab>
          ))}
        </Tabs>
        <Groups>
          {ribbonGroups.map((group, i) => (
            <React.Fragment key={group.label}>
              {i > 0 && <Divider />}
              <Group>
                <ToolRow>
                  {group.tools.map(([name, Icon]) => (
                    <button key={name} aria-label={name}>
                      <Icon />
                    </button>
                  ))}
                </ToolRow>
                <GroupLabel>
                  {group.label}
                  <Caret />
                </GroupLabel>
              </Group>
            </React.Fragment>
          ))}
        </Groups>
      </RibbonMain>
    </Ribbon>
  )
}

const Browser = () => (
  <Panel>
    <PanelHeader>
      <button aria-label='Collapse browser'>
        <RewindIcon />
      </button>
      <PanelTitle>BROWSER</PanelTitle>
      <button aria-label='Hide browser'>
        <RoundIcon />
      </button>
      <Grip />
    </PanelHeader>
    <Tree>
      <TreeRow $indent={17}>
        <Twisty aria-label='Collapse document'>
          <OpenTwisty />
        </Twisty>
        <Chip $root>
          <ChipButton aria-label='Toggle document visibility'>
            <EyeIcon />
          </ChipButton>
          <RootName>
            <ComponentIcon />
            <span>dog_bowl_stand_fir...</span>
          </RootName>
          <ChipButton aria-label='Owner' $after={6}>
            <OwnerIcon />
          </ChipButton>
          <ChipButton aria-label='Activate component'>
            <ActivateIcon />
          </ChipButton>
        </Chip>
      </TreeRow>
      <TreeRow $indent={35}>
        <Twisty aria-label='Expand Document Settings'>
          <ClosedTwisty />
        </Twisty>
        <Chip>
          <GearIcon />
          <NodeName>Document Settings</NodeName>
        </Chip>
      </TreeRow>
      <TreeRow $indent={35}>
        <Twisty aria-label='Expand Named Views'>
          <ClosedTwisty />
        </Twisty>
        <Chip>
          <FolderIcon />
          <NodeName>Named Views</NodeName>
        </Chip>
      </TreeRow>
      <TreeRow $indent={35}>
        <Twisty aria-label='Expand Origin'>
          <ClosedTwisty />
        </Twisty>
        <Chip>
          <ChipButton aria-label='Show Origin' $after={9}>
            <EyeIcon off />
          </ChipButton>
          <FolderIcon />
          <NodeName>Origin</NodeName>
        </Chip>
      </TreeRow>
      <TreeRow $indent={35}>
        <Twisty aria-label='Collapse Bodies'>
          <OpenTwisty />
        </Twisty>
        <Chip>
          <ChipButton aria-label='Hide Bodies' $after={9}>
            <EyeIcon />
          </ChipButton>
          <FolderIcon />
          <NodeName>Bodies</NodeName>
        </Chip>
      </TreeRow>
      <TreeRow $indent={72}>
        <Chip>
          <ChipButton aria-label='Hide Body1' $after={9}>
            <EyeIcon />
          </ChipButton>
          <BodyIcon />
          <NodeName>Body1</NodeName>
        </Chip>
      </TreeRow>
    </Tree>
  </Panel>
)

const Comments = () => (
  <Panel $bottom>
    <PanelHeader $openTop>
      <PanelTitle $indent>COMMENTS</PanelTitle>
      <button aria-label='Show comments'>
        <RoundIcon plus />
      </button>
      <Grip />
    </PanelHeader>
  </Panel>
)

const Navigation = () => (
  <NavBar>
    <NavButton aria-label='Orbit' $after={7}>
      <OrbitIcon />
      <Caret />
    </NavButton>
    <NavButton aria-label='Look At' $after={10}>
      <LookAtIcon />
    </NavButton>
    <NavButton aria-label='Pan' $after={10}>
      <PanIcon />
    </NavButton>
    <NavButton aria-label='Zoom' $after={10}>
      <ZoomIcon />
    </NavButton>
    <NavButton aria-label='Fit' $after={5}>
      <FitIcon />
      <Caret />
    </NavButton>
    <NavButton aria-label='Display Settings' $after={5}>
      <DisplayIcon />
      <Caret />
    </NavButton>
    <NavButton aria-label='Grid and Snaps' $after={5}>
      <LayoutGridIcon />
      <Caret />
    </NavButton>
    <NavButton aria-label='Viewports'>
      <ViewportsIcon />
      <Caret />
    </NavButton>
  </NavBar>
)

const playbackIcons = [
  ['Go to start', 'M0 0h2v14H0zM12 0v14L3 7z'],
  ['Step back', 'M8 1v12L0 7zM10 4h2v6h-2z'],
  ['Play', 'M1 0v14l11-7z'],
  ['Step forward', 'M4 1v12l9-6zM1 4h2v6H1z'],
  ['Go to end', 'M0 0v14l9-7zM10 0h2v14h-2z']
]

const History = () => (
  <TimelineArea>
    <ScrollThumb />
    <Timeline>
      <Playback>
        {playbackIcons.map(([name, d]) => (
          <PlayButton key={name} aria-label={name}>
            <Svg w={13} h={14}>
              <path d={d} fill='currentColor' />
            </Svg>
          </PlayButton>
        ))}
      </Playback>
      <TrackWrap>
        <Track>
          {features.map((kind, i) => (
            <Feature key={i} aria-label={kind} $rolledBack={i > 0}>
              <TimelineIcon kind={kind} />
            </Feature>
          ))}
        </Track>
        <Marker width='12' height='31' viewBox='0 0 12 31' aria-hidden='true'>
          <path d='M0 0h12v4L7 9v22H5V9L0 4z' fill='#5e5e5e' />
        </Marker>
      </TrackWrap>
      <TimelineSettings aria-label='Timeline settings'>
        <GearIcon fill='#8a8a8a' />
      </TimelineSettings>
    </Timeline>
  </TimelineArea>
)

const App = () => {
  return (
    <Page>
      <GlobalStyle />
      <Header />
      <Toolbar />
      <RibbonGap />
      <Viewport>
        <Model />
        <ViewCube />
        <Browser />
        <Comments />
        <Navigation />
      </Viewport>
      <History />
    </Page>
  )
}

export default App
